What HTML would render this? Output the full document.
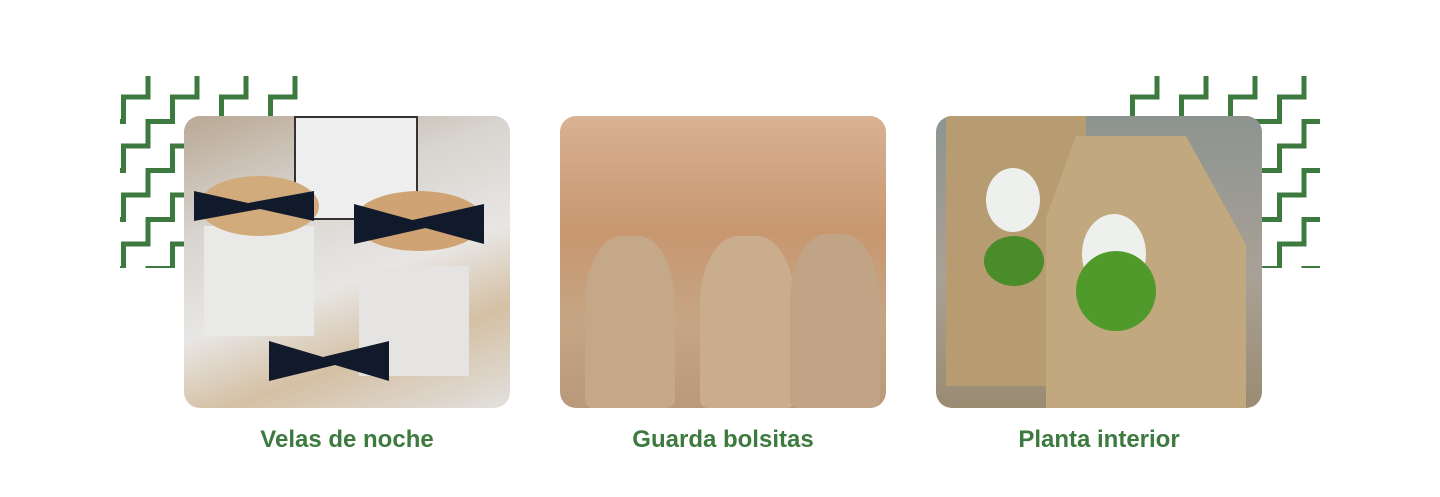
<!DOCTYPE html>
<html><head><meta charset="utf-8"><style>
body{margin:0;width:1440px;height:497px;background:#fff;position:relative;overflow:hidden;font-family:"Liberation Sans",sans-serif}
.img{position:absolute;top:116px;width:326px;height:292px;border-radius:16px;overflow:hidden}
.cap{position:absolute;top:426px;width:326px;text-align:center;color:#3d7a3f;font-size:24px;font-weight:bold}
svg{position:absolute;left:0;top:0}
</style></head><body>
<svg width="1440" height="497">
<defs>
<clipPath id="cl"><rect x="120" y="76" width="178" height="192"/></clipPath>
<clipPath id="cr"><rect x="1130" y="76" width="190" height="192"/></clipPath>
<path id="st" d="M0 0 v24.5 h-24.5 v24.5 h-24.5 v24.5 h-24.5 v24.5 h-24.5 v24.5 h-24.5 v24.5 h-24.5 v24.5 h-24.5 v24.5 h-24.5 v24.5 h-24.5 v24.5 h-24.5 v24.5 h-24.5 v24.5 h-24.5 v24.5 h-24.5 v24.5 h-24.5 v24.5 h-24.5 v24.5 h-24.5" fill="none" stroke="#3d7a3f" stroke-width="5"/>
</defs>
<g clip-path="url(#cl)">
<use href="#st" x="148" y="72.5"/><use href="#st" x="197" y="72.5"/><use href="#st" x="246" y="72.5"/><use href="#st" x="295" y="72.5"/><use href="#st" x="344" y="72.5"/><use href="#st" x="393" y="72.5"/><use href="#st" x="442" y="72.5"/><use href="#st" x="491" y="72.5"/><use href="#st" x="540" y="72.5"/>
</g>
<g clip-path="url(#cr)">
<use href="#st" x="1157" y="72.5"/><use href="#st" x="1206" y="72.5"/><use href="#st" x="1255" y="72.5"/><use href="#st" x="1304" y="72.5"/><use href="#st" x="1353" y="72.5"/><use href="#st" x="1402" y="72.5"/><use href="#st" x="1451" y="72.5"/><use href="#st" x="1500" y="72.5"/><use href="#st" x="1549" y="72.5"/>
</g>
</svg>
<div class="img" style="left:184px;background:linear-gradient(160deg,#b9a894 0%,#d8d4cf 30%,#e8e6e4 55%,#d4c0a4 75%,#e2e0de 100%)">
<div style="position:absolute;left:110px;top:0;width:120px;height:100px;background:#eeeeee;border:2px solid #333"></div>
<div style="position:absolute;left:20px;top:110px;width:110px;height:110px;background:#e9e9e8"></div>
<div style="position:absolute;left:175px;top:150px;width:110px;height:110px;background:#e6e4e2"></div>
<div style="position:absolute;left:15px;top:60px;width:120px;height:60px;border-radius:50%;background:#d2ab7c"></div>
<div style="position:absolute;left:170px;top:75px;width:130px;height:60px;border-radius:50%;background:#cfa374"></div>
<div style="position:absolute;left:10px;top:75px;width:120px;height:30px;background:#111a2b;clip-path:polygon(0 0,45% 40%,100% 0,100% 100%,55% 60%,0 100%)"></div>
<div style="position:absolute;left:170px;top:88px;width:130px;height:40px;background:#111a2b;clip-path:polygon(0 0,45% 40%,100% 0,100% 100%,55% 60%,0 100%)"></div>
<div style="position:absolute;left:85px;top:225px;width:120px;height:40px;background:#111a2b;clip-path:polygon(0 0,45% 40%,100% 0,100% 100%,55% 60%,0 100%)"></div>
</div>
<div class="img" style="left:560px;background:linear-gradient(180deg,#d8b294 0%,#c8976f 40%,#c5a584 70%,#b9997a 100%)">
<div style="position:absolute;left:25px;top:120px;width:90px;height:172px;background:#c4a888;border-radius:40% 40% 8px 8px"></div>
<div style="position:absolute;left:140px;top:120px;width:95px;height:172px;background:#c9ad8d;border-radius:40% 40% 8px 8px"></div>
<div style="position:absolute;left:230px;top:118px;width:90px;height:174px;background:#c0a485;border-radius:40% 40% 8px 8px"></div>
</div>
<div class="img" style="left:936px;background:linear-gradient(180deg,#8d9490 0%,#a9a196 55%,#9a8b72 100%)">
<div style="position:absolute;left:10px;top:0;width:140px;height:270px;background:#b79c72"></div>
<div style="position:absolute;left:110px;top:20px;width:200px;height:272px;background:#c2a87e;clip-path:polygon(15% 0,70% 0,100% 40%,100% 100%,0 100%,0 30%)"></div>
<div style="position:absolute;left:50px;top:52px;width:54px;height:64px;border-radius:50%;background:#eef0ee"></div>
<div style="position:absolute;left:146px;top:98px;width:64px;height:80px;border-radius:50%;background:#eef0ee"></div>
<div style="position:absolute;left:140px;top:135px;width:80px;height:80px;border-radius:50%;background:#4f9a2a"></div>
<div style="position:absolute;left:48px;top:120px;width:60px;height:50px;border-radius:50%;background:#4a8c2a"></div>
</div>
<div class="cap" style="left:184px">Velas de noche</div>
<div class="cap" style="left:560px">Guarda bolsitas</div>
<div class="cap" style="left:936px">Planta interior</div>
</body></html>
